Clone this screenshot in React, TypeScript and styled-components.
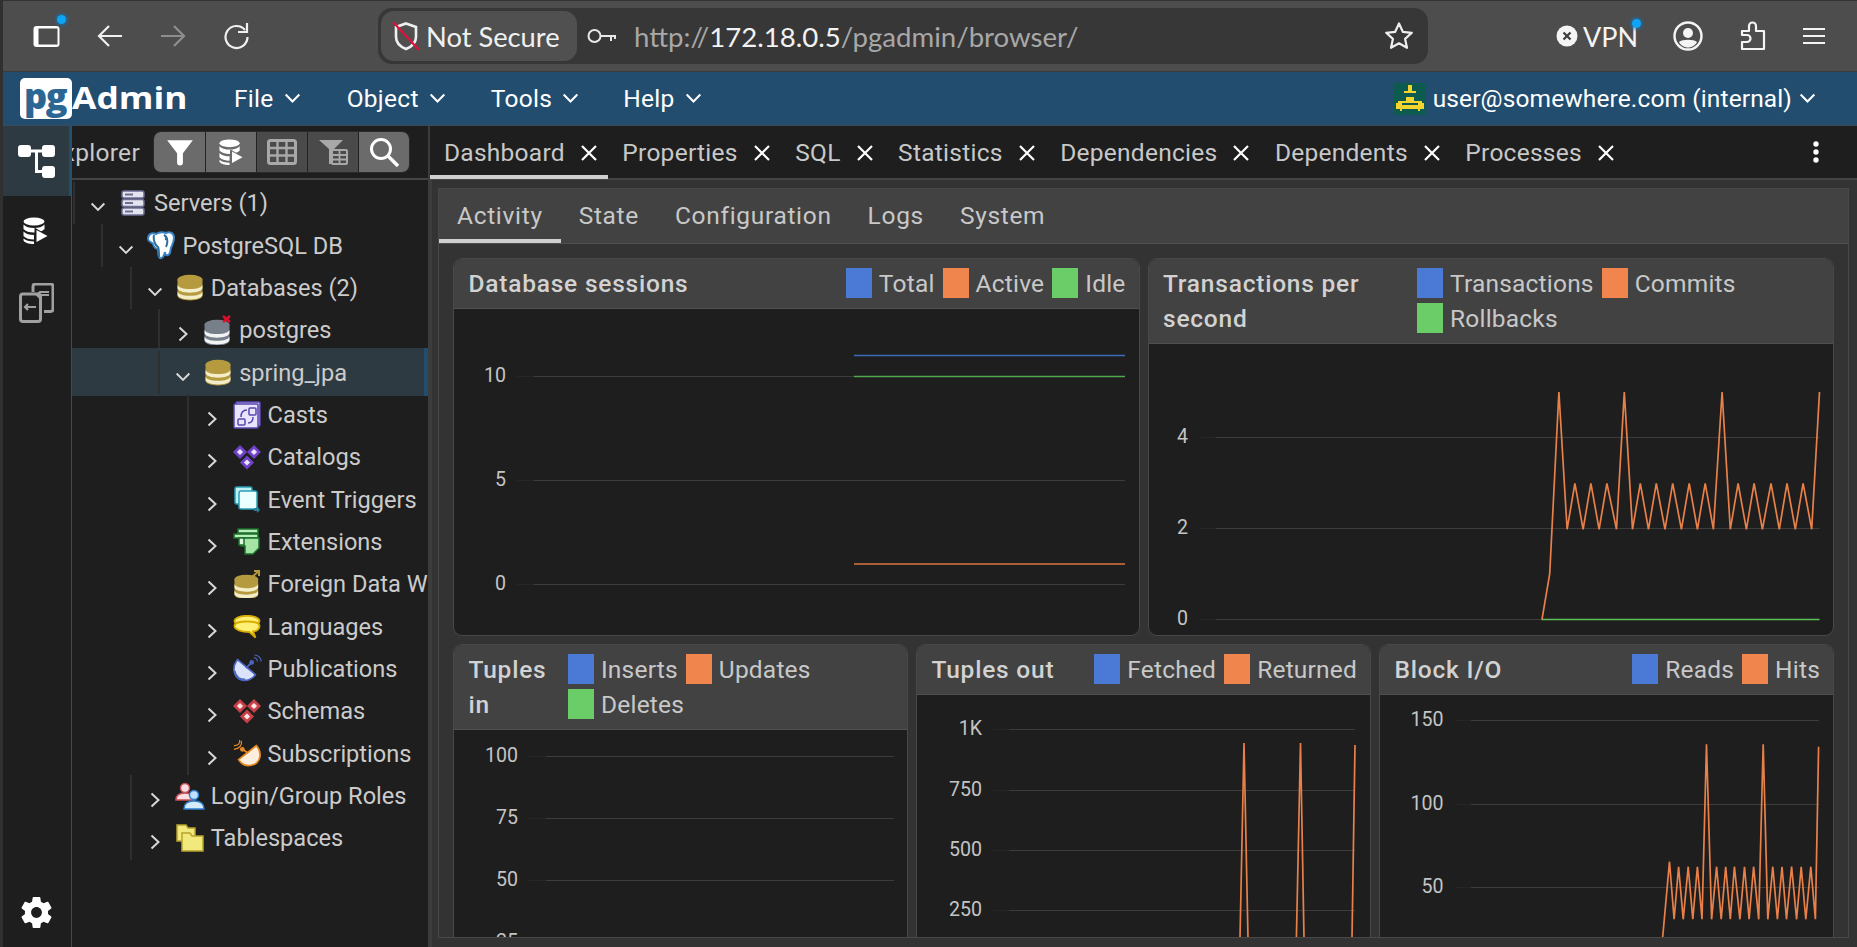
import React from 'react';
import styled, { createGlobalStyle } from 'styled-components';

const Global = createGlobalStyle`
  html, body { margin: 0; padding: 0; height: 100%; overflow: hidden; background: #1e1e1e; }
  #root { height: 100%; }
  * { box-sizing: border-box; }
`;

const Page = styled.div`
  height: 947px; width: 1857px; display: flex; flex-direction: column;
  font-family: Roboto, "Liberation Sans", sans-serif; color: #c8c8c8;
  border-left: 3px solid #303030; overflow: hidden;
`;

/* ---------- browser chrome ---------- */
const BrowserBar = styled.div`
  height: 72px; flex: none; display: flex; align-items: center; background: #4d4d4d;
  border-top: 1px solid #333; border-bottom: 1px solid #3a3a3a; padding-left: 12px;
  font-family: Lato, "Noto Sans", sans-serif;
`;
const NavSlot = styled.div<{ $w?: number; $ml?: number }>`
  width: ${p => p.$w ?? 63}px; margin-left: ${p => p.$ml ?? 0}px; flex: none; height: 40px; display: flex; align-items: center; justify-content: center;
  position: relative;
`;
const AddressBar = styled.div`
  margin-left: 111px; width: 1050px; height: 56px; border-radius: 14px; background: #373737; flex: none;
  display: flex; align-items: center; padding: 3px 14px 3px 3px;
`;
const SecurityChip = styled.div`
  width: 196px; height: 50px; border-radius: 13px; background: #505050; display: flex; align-items: center;
  padding-left: 11px; gap: 6px; color: #f0f0f0; font-size: 27.3px; flex: none;
`;
const UrlText = styled.div`
  margin-left: 17px; flex: 1; font-size: 27.6px; color: #a8a8a8; white-space: nowrap;
  b { color: #f2f2f2; font-weight: 400; }
`;
const RightTools = styled.div`
  margin-left: 128px; display: flex; align-items: center; flex: none;
`;
const VpnPill = styled.div`
  display: flex; align-items: center; gap: 5px; color: #f4f4f4; font-size: 27px; position: relative; width: 102px;
`;
const BlueDot = styled.span<{ $x: number; $y: number }>`
  position: absolute; left: ${p => p.$x}px; top: ${p => p.$y}px; width: 9px; height: 9px; border-radius: 50%;
  background: #0ea5f5; box-shadow: 0 0 3px 2px rgba(14,120,190,.55);
`;

/* ---------- pgAdmin header ---------- */
const AppHeader = styled.div`
  height: 54px; flex: none; background: #224d6f; display: flex; align-items: center; padding: 0 41px 0 17px;
  border-bottom: 1px solid #3a4a58; color: #fff;
`;
const LogoBox = styled.div`
  width: 52px; height: 41px; background: #fff; border-radius: 5px; display: flex; align-items: center; justify-content: center;
  color: #2c6794; font: 800 36px/41px "Open Sans", sans-serif; letter-spacing: -1.5px; padding: 0 2px 7px 0; flex: none;
`;
const LogoWord = styled.div`
  font: 700 31px/1 "Open Sans", sans-serif; color: #fff; width: 114px; flex: none; white-space: nowrap;
  transform: scaleX(1.14); transform-origin: left center; padding-bottom: 3px;
`;
const Menu = styled.div`
  display: flex; align-items: center; margin-left: 48px; gap: 10px; font-size: 24.5px; color: #fff; letter-spacing: .3px;
`;
const MenuGap = styled.div<{ $w: number }>` width: ${p => p.$w}px; flex: none; `;
const UserArea = styled.div`
  margin-left: auto; display: flex; align-items: center; gap: 7px; font-size: 24.5px; color: #fff; letter-spacing: .12px;
`;

/* ---------- workspace ---------- */
const Workspace = styled.div` flex: 1; min-height: 0; display: flex; `;
const ActivityBar = styled.div`
  width: 69px; flex: none; background: #1e1e1e; border-right: 1px solid #484848; display: flex; flex-direction: column;
`;
const ActivityButton = styled.div<{ $active?: boolean }>`
  height: 70px; display: flex; align-items: center; justify-content: center;
  background: ${p => (p.$active ? '#2e3a42' : 'transparent')};
  border-right: 2px solid ${p => (p.$active ? '#224d6f' : 'transparent')};
`;
const ActivitySpacer = styled.div` flex: 1; `;

const TreePanel = styled.div` width: 356px; flex: none; background: #1e1e1e; display: flex; flex-direction: column; overflow: hidden; `;
const TreeToolbar = styled.div`
  height: 54px; flex: none; display: flex; align-items: center; border-bottom: 2px solid #444; padding-right: 18px;
`;
const ToolbarTitle = styled.div`
  flex: 1; min-width: 0; overflow: hidden; display: flex; justify-content: flex-end; padding-right: 13px;
  font-size: 24.5px; color: #c8c8c8; white-space: nowrap; letter-spacing: .3px;
`;
const ToolGroup = styled.div`
  display: flex; height: 42px; border-radius: 8px; overflow: hidden; flex: none; border: 1px solid #2a2a2a;
`;
const ToolButton = styled.div<{ $off?: boolean }>`
  width: 51px; display: flex; align-items: center; justify-content: center;
  background: ${p => (p.$off ? '#4a4a4a' : '#6b6b6b')};
  & + & { border-left: 1px solid #222; }
`;
const Tree = styled.div` padding-top: 2px; flex: 1; `;
const Row = styled.div<{ $level: number; $selected?: boolean }>`
  height: 42.35px; display: flex; align-items: center; position: relative; white-space: nowrap;
  padding-left: ${p => 18 + p.$level * 28.4}px; font-size: 23.6px; color: #cbcbcb;
  &::before {
    content: ''; position: absolute; left: 0; right: 0; top: -3px; bottom: -2px; display: ${p => (p.$selected ? 'block' : 'none')};
    background: #2e3a42; border-right: 4px solid #224d6f;
  }
  &::after {
    content: ''; position: absolute; top: 0; bottom: 0; left: ${p => 1 + p.$level * 28.4}px; width: 2px; background: #2f2f2f;
  }
  > * { position: relative; z-index: 1; }
`;
const Chevron = styled.div` width: 16px; flex: none; display: flex; justify-content: center; padding-top: 8px; `;
const RowIcon = styled.div` width: 30px; height: 30px; margin-left: 12px; margin-right: 6px; flex: none; display: flex; align-items: center; justify-content: center; `;

const Splitter = styled.div` width: 4px; flex: none; background: #3c3c3c; `;

/* ---------- main panel ---------- */
const MainPanel = styled.div` flex: 1; min-width: 0; display: flex; flex-direction: column; background: #333; `;
const TabStrip = styled.div`
  height: 54px; flex: none; background: #1e1e1e; display: flex; align-items: stretch; border-bottom: 2px solid #444;
  margin-left: -2px; padding-right: 37px; font-size: 24.5px;
`;
const DockTab = styled.div<{ $active?: boolean }>`
  display: flex; align-items: center; gap: 15px; padding: 0 10.5px 0 14px; color: #c8c8c8; white-space: nowrap; letter-spacing: .26px;
  border-bottom: 4px solid ${p => (p.$active ? '#cfcfcf' : 'transparent')}; margin-bottom: -1px; padding-top: 4px;
`;
const TabMore = styled.div` margin-left: auto; display: flex; align-items: center; `;
const Panel = styled.div`
  flex: 1; min-height: 0; margin: 8px 8px 9px 6px; border: 1px solid #484848; display: flex; flex-direction: column; overflow: hidden;
`;
const InnerTabs = styled.div`
  height: 55px; flex: none; background: #424242; display: flex; border-bottom: 1px solid #505050; font-size: 24.5px;
`;
const InnerTab = styled.div<{ $active?: boolean }>`
  padding: 2px 18px 0; display: flex; align-items: center; color: #c8c8c8; letter-spacing: .68px; white-space: nowrap;
  border-bottom: 4px solid ${p => (p.$active ? '#cfcfcf' : 'transparent')};
`;
const Dash = styled.div` flex: 1; min-height: 0; padding: 14px 14px 0; display: flex; flex-direction: column; gap: 8px; `;
const ChartRow = styled.div<{ $h: number }>` display: flex; gap: 8px; height: ${p => p.$h}px; flex: none; `;
const Card = styled.div`
  flex: 1 1 0; min-width: 0; background: #1e1e1e; border: 1px solid #484848; border-radius: 9px; overflow: hidden; display: flex; flex-direction: column;
`;
const CardHead = styled.div`
  flex: none; background: #424242; display: flex; justify-content: space-between; padding: 9px 13px 10px 14.5px; border-bottom: 1px solid #505050;
`;
const CardTitle = styled.div`
  font-size: 24.5px; font-weight: 500; color: #d2d2d2; line-height: 35px; margin: -2.5px 0; flex: 1 1 0; min-width: 0; letter-spacing: .78px;
`;
const Legend = styled.div<{ $w?: number }>`
  display: flex; flex-wrap: wrap; gap: 5px 8px; flex: ${p => (p.$w ? `0 0 ${p.$w}px` : 'none')};
`;
const LegendItem = styled.div` display: flex; align-items: center; gap: 7px; height: 30px; font-size: 24.5px; color: #c8c8c8; letter-spacing: .2px; white-space: nowrap; `;
const Swatch = styled.span<{ $c: string }>` width: 26px; height: 30px; background: ${p => p.$c}; flex: none; `;
const ChartBody = styled.div` flex: 1; min-height: 0; overflow: hidden; svg { display: block; } `;
const AxisLabel = styled.text` font-family: Roboto, sans-serif; font-size: 19.6px; fill: #c4c4c4; text-anchor: end; `;

const BLUE = '#4a79d6', ORANGE = '#f0864d', GREEN = '#6acd68';

/* ---------- small glyphs ---------- */
const Down = ({ c = '#d8d8d8', s = 14 }: { c?: string; s?: number }) => (
  <svg width={s + 2} height={s * 0.7} viewBox="0 0 16 10"><polyline points="1.5,1.5 8,8 14.5,1.5" fill="none" stroke={c} strokeWidth="2" /></svg>
);
const Right = () => (
  <svg width={10} height={16} viewBox="0 0 10 16"><polyline points="1.5,1.5 8.5,8 1.5,14.5" fill="none" stroke="#d8d8d8" strokeWidth="2" /></svg>
);
const Close = () => (
  <svg width={18} height={18} viewBox="0 0 18 18"><path d="M2 2 16 16M16 2 2 16" stroke="#fff" strokeWidth="2.2" /></svg>
);

const Cyl = ({ top, band, light }: { top: string; band: string; light: string }) => (
  <svg width="28" height="27" viewBox="0 0 26 26">
    <path d="M1 5v16c0 2.6 5.4 4.5 12 4.5S25 23.600 25 21V5z" fill={band} />
    <path d="M1 10c0 2.600 5.400 4.500 12 4.500S25 12.600 25 10v3.500c0 2.600-5.400 4.500-12 4.500S1 16.100 1 13.500z" fill={light} />
    <path d="M1 16.500c0 2.600 5.400 4.500 12 4.500s12-1.900 12-4.500V20c0 2.600-5.400 4.500-12 4.500S1 22.600 1 20z" fill={light} />
    <ellipse cx="13" cy="5.500" rx="12" ry="4.800" fill={top} />
  </svg>
);
const Diamonds = ({ c, f }: { c: string; f: string }) => (
  <svg width="28" height="27" viewBox="0 0 28 27">
    {[[7, 8], [21, 8], [14, 18.500]].map(([x, y]) => (
      <g key={`${x}${y}`}>
        <rect x={x - 5} y={y - 5} width="10" height="10" transform={`rotate(45 ${x} ${y})`} fill={c} />
        <rect x={x - 2.200} y={y - 2.200} width="4.400" height="4.400" transform={`rotate(45 ${x} ${y})`} fill={f} />
      </g>
    ))}
  </svg>
);

const ServersIcon = () => (
  <svg width="24" height="26" viewBox="0 0 24 26">
    {[1, 9.500, 18].map(y => (
      <g key={y}><rect x="1" y={y} width="22" height="7" rx="2" fill="#e4e4ee" stroke="#6d6d94" strokeWidth="1.500" /><rect x="4" y={y + 2.500} width="8" height="2" fill="#6d6d94" /></g>
    ))}
  </svg>
);
const Elephant = () => (
  <svg width="30" height="32" viewBox="0 0 30 32">
    <path d="M2 9c0-5 4-7 8-5 3-2 7-2 10-1 4-2 8 0 8 5 0 4-2 7-3 10-1 2 0 6-3 7-2 1-3-1-3-3-1 3-2 7-5 6-2-1-2-6-2-9-3 0-4-2-5-5-1-2-5-2-5-5z" fill="#fff" stroke="#3a86c8" strokeWidth="2" />
    <path d="M8 5c-1 5 1 10 4 12 1 1 1 6 1 10M18 5c4 2 4 8 2 12" fill="none" stroke="#2f6f9f" strokeWidth="2" />
    <circle cx="20" cy="9" r="1.200" fill="#2f6f9f" />
  </svg>
);
const CastsIcon = () => (
  <svg width="28" height="28" viewBox="0 0 28 28">
    <rect x="3" y="1" width="24" height="24" rx="1" fill="#cfc8f2" stroke="#5b45b0" strokeWidth="1.500" />
    <rect x="1" y="3" width="24" height="24" rx="1" fill="#e7e4fb" stroke="#5b45b0" strokeWidth="1.500" />
    <rect x="16" y="7" width="7" height="7" rx="1" fill="none" stroke="#5b45b0" strokeWidth="1.500" />
    <rect x="5" y="18" width="7" height="6" rx="1" fill="none" stroke="#5b45b0" strokeWidth="1.500" />
    <path d="M8 16c0-5 2-7 6-7M20 16c0 4-2 6-5 6" fill="none" stroke="#5b45b0" strokeWidth="1.500" />
  </svg>
);
const EventIcon = () => (
  <svg width="26" height="28" viewBox="0 0 26 28">
    <rect x="1" y="1" width="17" height="17" rx="2" fill="#bff0f5" stroke="#29a0b4" strokeWidth="1.500" />
    <rect x="5" y="5" width="18" height="18" rx="2" fill="#eaffff" stroke="#29a0b4" strokeWidth="1.500" />
    <path d="M20 22h3v-2l3 4-3 3v-2h-3z" fill="#29819b" />
  </svg>
);
const ExtIcon = () => (
  <svg width="28" height="28" viewBox="0 0 28 28">
    <path d="M5 1h20v4H5zM1 6h24v4H1z" fill="#b8eeb8" stroke="#1d6f2d" strokeWidth="1.500" />
    <path d="M8 10h18v10l-6 6H12V18H8z" fill="#a5e4a5" stroke="#1d6f2d" strokeWidth="1.500" />
    <path d="M6 10h5v7H6z" fill="#dff7df" stroke="#1d6f2d" strokeWidth="1.500" />
  </svg>
);
const FdwIcon = () => (
  <svg width="28" height="28" viewBox="0 0 28 28">
    <g transform="translate(0 4) scale(.95)"><Cyl top="#b59a3f" band="#b59a3f" light="#f3edc9" /></g>
    <path d="M19 7 26 1M21 1h5v5" fill="none" stroke="#b59a3f" strokeWidth="2" />
  </svg>
);
const LangIcon = () => (
  <svg width="28" height="24" viewBox="0 0 28 24">
    <ellipse cx="14" cy="6" rx="12.500" ry="5.200" fill="#fff176" stroke="#d8ac00" strokeWidth="1.800" />
    <path d="M1.500 11c0-3 5-4.500 12.500-4.500S26.500 8 26.500 11s-3 5-6.500 5.500l2.500 6-6-5.500c-8 0-15-2.500-15-6z" fill="#fff176" stroke="#d8ac00" strokeWidth="1.800" />
  </svg>
);
const PubIcon = () => (
  <svg width="32" height="32" viewBox="0 0 32 32">
    <path d="M6 6C0 13 1 23 8 27c7 3 14 0 17-5z" fill="#dbe3fa" stroke="#4a66c2" strokeWidth="1.800" />
    <path d="M3 18c1 5 5 9 11 9" fill="none" stroke="#4a66c2" strokeWidth="1.500" />
    <path d="M15 15l6-6" stroke="#4a66c2" strokeWidth="2" />
    <circle cx="21" cy="9" r="2.500" fill="#4a66c2" />
    <path d="M23 4c2 0 4 1 4 4M24 1c4 0 7 3 7 7" fill="none" stroke="#4a66c2" strokeWidth="1.200" />
  </svg>
);
const SubIcon = () => (
  <svg width="32" height="32" viewBox="0 0 32 32">
    <path d="M26 7c6 7 5 16-2 20-7 3-13 1-17-5z" fill="#fdeedd" stroke="#e88a22" strokeWidth="1.800" />
    <path d="M17 15 11 11" stroke="#e88a22" strokeWidth="2" />
    <circle cx="11" cy="11" r="2.500" fill="#e88a22" />
    <path d="M8 1c1 3-1 6-6 6M10 2c1 5-2 8-8 9" fill="none" stroke="#e88a22" strokeWidth="1.300" />
  </svg>
);
const RolesIcon = () => (
  <svg width="30" height="28" viewBox="0 0 30 28">
    <circle cx="10" cy="6" r="4.500" fill="#fbdede" stroke="#c8505a" strokeWidth="1.500" />
    <path d="M1 18c0-5 3-7 9-7s9 2 9 7z" fill="#fbdede" stroke="#c8505a" strokeWidth="1.500" />
    <circle cx="19" cy="13" r="4.500" fill="#bfe1fb" stroke="#2f7fd0" strokeWidth="1.500" />
    <path d="M9 27c0-6 4-8 10-8s10 2 10 8z" fill="#d6ecfc" stroke="#2f7fd0" strokeWidth="1.500" />
  </svg>
);
const TableSpaces = () => (
  <svg width="28" height="28" viewBox="0 0 28 28">
    <path d="M1 1h9l2 3h7v13H1z" fill="#f2e97c" stroke="#b8a22c" strokeWidth="1.500" />
    <path d="M6 9h8l2 3h11v15H6z" fill="#f2e97c" stroke="#b8a22c" strokeWidth="1.500" />
  </svg>
);
const PostgresIcon = () => (
  <svg width="30" height="30" viewBox="0 0 30 30">
    <g transform="translate(0 4)"><Cyl top="#77808a" band="#77808a" light="#f2f3f5" /></g>
    <path d="M20 1l7 6M27 1l-7 6" stroke="#e0102c" strokeWidth="2.400" />
  </svg>
);
const Gold = () => <Cyl top="#b59a3f" band="#b59a3f" light="#f3edc9" />;

/* tool icons */
const Funnel = ({ c = '#fff', s = 28 }: { c?: string; s?: number }) => (
  <svg width={s} height={s} viewBox="0 0 24 24"><path d="M1 2h22L14.500 13v8.500c0 1.500-1 2-2.500 2s-2.500-.5-2.500-2V13z" fill={c} /></svg>
);
const DbPlay = ({ s = 28, gap = '#6b6b6b' }: { s?: number; gap?: string }) => (
  <svg width={s} height={s} viewBox="0 0 28 28">
    <ellipse cx="12" cy="4.500" rx="10.500" ry="4" fill="#fff" />
    <path d="M1.500 7.500c2 2.500 6 3.500 10.500 3.500s8.500-1 10.500-3.500V12c-2 2.500-6 3.500-10.500 3.500S3.500 14.500 1.500 12z" fill="#fff" />
    <path d="M1.500 14.500c2 2.500 6 3.500 10.500 3.500v4.500c-4.500 0-8.500-1-10.500-3.500z" fill="#fff" />
    <path d="M1.500 21.500c2 2 6 3 10.500 3v2.500c-5 0-10.500-1.500-10.500-4z" fill="#fff" />
    <path d="M12.500 10.500v17.500l15-8.750z" fill={gap} />
    <path d="M14.500 13v12l11-6z" fill="#fff" />
  </svg>
);
const GridIcon = () => (
  <svg width="30" height="26" viewBox="0 0 30 26">
    <rect x="1.500" y="1.500" width="27" height="23" rx="2" fill="none" stroke="#a8a8a8" strokeWidth="3" />
    <path d="M1.500 9h27M1.500 16.500h27M10.500 1.500v23M19.500 1.500v23" stroke="#a8a8a8" strokeWidth="2.400" />
  </svg>
);
const FilterGrid = () => (
  <svg width="30" height="26" viewBox="0 0 30 26">
    <path d="M1 1h24l-9 9v15h-5V10z" fill="#a8a8a8" />
    <rect x="14" y="11" width="15" height="14" rx="1" fill="#4a4a4a" stroke="#a8a8a8" strokeWidth="2" />
    <path d="M14 16h15M14 20.500h15M21.500 11v14" stroke="#a8a8a8" strokeWidth="1.800" />
  </svg>
);
const Search = () => (
  <svg width="30" height="30" viewBox="0 0 30 30">
    <circle cx="12" cy="12" r="9.500" fill="none" stroke="#fff" strokeWidth="3" /><path d="M19 19l10 10" stroke="#fff" strokeWidth="3.400" />
  </svg>
);
const TreeNav = () => (
  <svg width="37" height="33" viewBox="0 0 37 33">
    <rect x="0" y="0" width="13" height="12" rx="3" fill="#fff" /><rect x="24" y="0" width="13" height="12" rx="3" fill="#fff" /><rect x="24" y="21" width="13" height="12" rx="3" fill="#fff" />
    <path d="M13 6h11M18.500 6v20.500H24" fill="none" stroke="#fff" strokeWidth="3" />
  </svg>
);
const Compare = () => (
  <svg width="35" height="40" viewBox="0 0 35 40" style={{ marginTop: 3 }}>
    <path d="M14 9V3.500C14 2 15 1 16.500 1h15C33 1 34 2 34 3.500V26c0 1.500-1 2.500-2.500 2.500H25" fill="none" stroke="#a0a0a0" strokeWidth="3" />
    <rect x="1.500" y="11" width="20" height="27.500" rx="2.500" fill="none" stroke="#a0a0a0" strokeWidth="3" />
    <path d="M30 9h-9l-3 3 3 3M18 12h12" fill="none" stroke="#a0a0a0" strokeWidth="2.200" />
    <path d="M6 24h11M9 21l-3 3 3 3" fill="none" stroke="#a0a0a0" strokeWidth="2.200" />
  </svg>
);
const Gear = () => (
  <svg width="37" height="37" viewBox="0 0 24 24">
    <path fill="#fff" d="M19.430 12.980c.04-.32.07-.64.07-.98 0-.34-.03-.66-.07-.98l2.110-1.650c.19-.15.24-.42.120-.64l-2-3.460c-.12-.22-.39-.3-.61-.22l-2.490 1c-.52-.4-1.080-.73-1.690-.98l-.38-2.650C14.460 2.180 14.250 2 14 2h-4c-.25 0-.46.18-.49.420l-.38 2.650c-.61.25-1.170.59-1.690.98l-2.490-1c-.23-.09-.49 0-.61.220l-2 3.460c-.13.22-.07.490.120.640l2.110 1.650c-.04.320-.07.650-.07.980 0 .33.030.660.070.980l-2.110 1.650c-.19.150-.24.420-.12.640l2 3.460c.12.220.39.300.61.220l2.490-1c.52.400 1.080.730 1.690.980l.38 2.650c.03.240.24.420.49.420h4c.25 0 .46-.18.490-.42l.38-2.650c.61-.25 1.170-.59 1.690-.98l2.490 1c.23.090.49 0 .61-.22l2-3.460c.12-.22.07-.49-.12-.64l-2.110-1.650zM12 15.500c-1.930 0-3.500-1.570-3.500-3.500s1.570-3.500 3.500-3.500 3.500 1.570 3.500 3.500-1.570 3.500-3.500 3.500z" />
  </svg>
);
const Avatar = () => (
  <svg width="32" height="32" viewBox="0 0 16 16" shapeRendering="crispEdges">
    <rect width="16" height="16" fill="#0d5a50" />
    <path d="M7 1h2v3h2v1H5V4h2zM6 7h4v2h4v1h1v3h-2v1h-1v-1H4v1H3v-1H1v-3h1V9h4zM4 10v1h8v-1z" fill="#f5d430" fillRule="evenodd" />
  </svg>
);

/* chrome icons */
const WindowIcon = () => (
  <svg width="30" height="26" viewBox="0 0 30 26">
    <rect x="1.500" y="3" width="26" height="21" rx="3" fill="#fff" />
    <rect x="6.500" y="5.500" width="19" height="16" fill="#4d4d4d" />
  </svg>
);
const Arrow = ({ c, flip }: { c: string; flip?: boolean }) => (
  <svg width="26" height="24" viewBox="0 0 26 24" style={flip ? { transform: 'scaleX(-1)' } : undefined}>
    <path d="M25 12H2M12 2 2 12l10 10" fill="none" stroke={c} strokeWidth="2.200" />
  </svg>
);
const Reload = () => (
  <svg width="26" height="28" viewBox="0 0 26 28">
    <path d="M22 8a11 11 0 1 0 2.500 7" fill="none" stroke="#f0f0f0" strokeWidth="2.200" />
    <path d="M24 1v9h-9" fill="none" stroke="#f0f0f0" strokeWidth="2.200" />
  </svg>
);
const Shield = () => (
  <svg width="28" height="30" viewBox="0 0 28 30">
    <path d="M14 2.500 24 6v10c0 6-5 10-10 12C9 26 4 22 4 16V6z" fill="none" stroke="#f0f0f0" strokeWidth="2.600" />
    <path d="M1 1 27 29" stroke="#e0123c" strokeWidth="2.200" />
  </svg>
);
const KeyIcon = () => (
  <svg width="30" height="18" viewBox="0 0 30 18">
    <circle cx="7.500" cy="9" r="6" fill="none" stroke="#e8e8e8" strokeWidth="2" />
    <path d="M13.500 9H29M24 9v5M28 9v3" fill="none" stroke="#e8e8e8" strokeWidth="2" />
  </svg>
);
const Star = () => (
  <svg width="30" height="30" viewBox="0 0 30 30">
    <path d="M15 2.500l3.800 8.300 9 1-6.700 6.100 1.900 8.900L15 22.300 7 26.800l1.900-8.900-6.700-6.100 9-1z" fill="none" stroke="#eee" strokeWidth="2.200" strokeLinejoin="round" />
  </svg>
);
const VpnX = () => (
  <svg width="22" height="22" viewBox="0 0 22 22">
    <circle cx="11" cy="11" r="10.500" fill="#f4f4f4" /><path d="M7.500 7.500l7 7M14.500 7.500l-7 7" stroke="#3c3c3c" strokeWidth="2.200" />
  </svg>
);
const Profile = () => (
  <svg width="30" height="30" viewBox="0 0 30 30">
    <circle cx="15" cy="15" r="13.500" fill="none" stroke="#f4f4f4" strokeWidth="2.400" />
    <circle cx="15" cy="12" r="5" fill="#f4f4f4" /><path d="M6 21c3-3 15-3 18 0-2 4-6 5.500-9 5.500S8 25 6 21z" fill="#f4f4f4" />
  </svg>
);
const Puzzle = () => (
  <svg width="26" height="30" viewBox="0 0 26 30">
    <path d="M2 10h7V5a3.500 3.500 0 0 1 7 0v5h8v18H2v-7h5a3.500 3.500 0 0 0 0-7H2z" fill="none" stroke="#f4f4f4" strokeWidth="2.200" strokeLinejoin="round" />
  </svg>
);
const Burger = () => (
  <svg width="22" height="18" viewBox="0 0 22 18"><path d="M0 2h22M0 9h22M0 16h22" stroke="#f4f4f4" strokeWidth="2.200" /></svg>
);
const Kebab = () => (
  <svg width="8" height="24" viewBox="0 0 8 24"><circle cx="4" cy="4" r="2.700" fill="#fff" /><circle cx="4" cy="12" r="2.700" fill="#fff" /><circle cx="4" cy="20" r="2.700" fill="#fff" /></svg>
);

/* chart helpers: coordinates are given in page pixels so each plot maps 1:1 on the viewBox */
type Line = { c: string; pts: string };
type PlotSpec = { l: number; t: number; w: number; h: number; x0: number; x1: number; lx: number; ticks: [string, number][]; lines: Line[] };
const Plot = ({ l, t, w, h, x0, x1, lx, ticks, lines }: PlotSpec) => (
  <svg width={w} height={h} viewBox={`${l} ${t} ${w} ${h}`}>
    {ticks.map(([label, y]) => (
      <g key={label}>
        <path d={`M${lx + 11} ${y + .5}H${x0}`} stroke="#262626" />
        <path d={`M${x0} ${y + .5}H${x1}`} stroke="#3c3c3c" strokeWidth="1.200" />
        <AxisLabel x={lx} y={y + 6}>{label}</AxisLabel>
      </g>
    ))}
    {lines.map((s, i) => <polyline key={i} points={s.pts} fill="none" stroke={s.c} strokeWidth="1.700" strokeLinejoin="miter" />)}
  </svg>
);
const mapPts = (raw: number[][], ox: number, sx: number, oy: number) =>
  raw.map(([x, y]) => `${(ox + x * sx).toFixed(1)},${(oy + y / 3).toFixed(1)}`).join(' ');

const txRaw = [[878,898],[895,762],[915,216],[933,628],[950,490],[968,628],[985,490],[1003,628],[1020,490],[1041,628],[1058,216],[1076,628],[1093,490],[1111,628],[1128,490],[1147,628],[1164,490],[1183,628],[1200,490],[1218,628],[1235,490],[1253,628],[1272,216],[1290,628],[1307,490],[1325,628],[1342,490],[1360,628],[1379,490],[1397,628],[1414,490],[1432,628],[1449,490],[1468,628],[1485,216]];
const ioRaw = [[1143,894],[1158,665],[1168,838],[1178,680],[1188,838],[1199,680],[1209,838],[1219,680],[1229,838],[1239,313],[1250,838],[1261,680],[1271,838],[1281,680],[1291,838],[1300,680],[1312,838],[1322,680],[1332,838],[1342,680],[1353,838],[1363,313],[1373,838],[1384,680],[1394,838],[1404,680],[1414,838],[1425,680],[1436,838],[1446,680],[1456,838],[1467,680],[1477,838],[1484,320]];

const LineOrange = '#e8804a';

type TreeItem = { level: number; label: string; icon: React.ReactNode; open?: boolean; selected?: boolean };
const items: TreeItem[] = [
  { level: 0, label: 'Servers (1)', icon: <ServersIcon />, open: true },
  { level: 1, label: 'PostgreSQL DB', icon: <Elephant />, open: true },
  { level: 2, label: 'Databases (2)', icon: <Gold />, open: true },
  { level: 3, label: 'postgres', icon: <PostgresIcon /> },
  { level: 3, label: 'spring_jpa', icon: <Gold />, open: true, selected: true },
  { level: 4, label: 'Casts', icon: <CastsIcon /> },
  { level: 4, label: 'Catalogs', icon: <Diamonds c="#6f42c8" f="#ece6fb" /> },
  { level: 4, label: 'Event Triggers', icon: <EventIcon /> },
  { level: 4, label: 'Extensions', icon: <ExtIcon /> },
  { level: 4, label: 'Foreign Data Wrappers', icon: <FdwIcon /> },
  { level: 4, label: 'Languages', icon: <LangIcon /> },
  { level: 4, label: 'Publications', icon: <PubIcon /> },
  { level: 4, label: 'Schemas', icon: <Diamonds c="#c8404a" f="#fbe6e6" /> },
  { level: 4, label: 'Subscriptions', icon: <SubIcon /> },
  { level: 2, label: 'Login/Group Roles', icon: <RolesIcon /> },
  { level: 2, label: 'Tablespaces', icon: <TableSpaces /> },
];
const dockTabs = ['Dashboard', 'Properties', 'SQL', 'Statistics', 'Dependencies', 'Dependents', 'Processes'];
const innerTabs = ['Activity', 'State', 'Configuration', 'Logs', 'System'];

const LegendList = ({ list, w }: { list: [string, string][]; w?: number }) => (
  <Legend $w={w}>
    {list.map(([c, t]) => <LegendItem key={t}><Swatch $c={c} />{t}</LegendItem>)}
  </Legend>
);

export default function App() {
  return (
    <Page>
      <Global />
      <BrowserBar>
        <NavSlot><WindowIcon /><BlueDot $x={42} $y={-1} /></NavSlot>
        <NavSlot><Arrow c="#f0f0f0" /></NavSlot>
        <NavSlot><Arrow c="#8e8e8e" flip /></NavSlot>
        <NavSlot><Reload /></NavSlot>
        <AddressBar>
          <SecurityChip><Shield />Not Secure</SecurityChip>
          <NavSlot $w={30} $ml={10}><KeyIcon /></NavSlot>
          <UrlText>http://<b>172.18.0.5</b>/pgadmin/browser/</UrlText>
          <Star />
        </AddressBar>
        <RightTools>
          <VpnPill><VpnX />VPN<BlueDot $x={76} $y={-1} /></VpnPill>
          <NavSlot $w={59}><Profile /></NavSlot>
          <NavSlot $w={71}><Puzzle /></NavSlot>
          <NavSlot $w={52}><Burger /></NavSlot>
        </RightTools>
      </BrowserBar>

      <AppHeader>
        <LogoBox>pg</LogoBox>
        <LogoWord>Admin</LogoWord>
        <Menu>File <Down c="#fff" s={15} /><MenuGap $w={26} />Object <Down c="#fff" s={15} /><MenuGap $w={25} />Tools <Down c="#fff" s={15} /><MenuGap $w={24} />Help <Down c="#fff" s={15} /></Menu>
        <UserArea><Avatar />user@somewhere.com (internal) <Down c="#fff" s={15} /></UserArea>
      </AppHeader>

      <Workspace>
        <ActivityBar>
          <ActivityButton $active><TreeNav /></ActivityButton>
          <ActivityButton><DbPlay gap="#1e1e1e" /></ActivityButton>
          <ActivityButton><Compare /></ActivityButton>
          <ActivitySpacer />
          <ActivityButton><Gear /></ActivityButton>
        </ActivityBar>
        <TreePanel>
          <TreeToolbar>
            <ToolbarTitle><span>Object Explorer</span></ToolbarTitle>
            <ToolGroup>
              <ToolButton><Funnel /></ToolButton>
              <ToolButton><DbPlay s={27} /></ToolButton>
              <ToolButton $off><GridIcon /></ToolButton>
              <ToolButton $off><FilterGrid /></ToolButton>
              <ToolButton><Search /></ToolButton>
            </ToolGroup>
          </TreeToolbar>
          <Tree>
            {items.map(it => (
              <Row key={it.label} $level={it.level} $selected={it.selected}>
                <Chevron>{it.open ? <Down s={14} /> : <Right />}</Chevron>
                <RowIcon>{it.icon}</RowIcon>
                <span>{it.label}</span>
              </Row>
            ))}
          </Tree>
        </TreePanel>
        <Splitter />
        <MainPanel>
          <TabStrip>
            {dockTabs.map((t, i) => <DockTab key={t} $active={i === 0}>{t}<Close /></DockTab>)}
            <TabMore><Kebab /></TabMore>
          </TabStrip>
          <Panel>
            <InnerTabs>
              {innerTabs.map((t, i) => <InnerTab key={t} $active={i === 0}>{t}</InnerTab>)}
            </InnerTabs>
            <Dash>
              <ChartRow $h={378}>
                <Card>
                  <CardHead><CardTitle>Database sessions</CardTitle><LegendList list={[[BLUE, 'Total'], [ORANGE, 'Active'], [GREEN, 'Idle']]} /></CardHead>
                  <ChartBody>
                    <Plot l={454} t={309} w={684} h={326} x0={534} x1={1125} lx={506} ticks={[['10', 376], ['5', 480], ['0', 584]]}
                      lines={[{ c: '#3e6bb8', pts: '854,355.5 1125,355.5' }, { c: '#53a84f', pts: '854,376.5 1125,376.5' }, { c: '#d9743f', pts: '854,564 1125,564' }]} />
                  </ChartBody>
                </Card>
                <Card>
                  <CardHead><CardTitle>Transactions per second</CardTitle><LegendList w={403} list={[[BLUE, 'Transactions'], [ORANGE, 'Commits'], [GREEN, 'Rollbacks']]} /></CardHead>
                  <ChartBody>
                    <Plot l={1148.500} t={344} w={685} h={292} x0={1215} x1={1819} lx={1187.500} ticks={[['4', 437], ['2', 528], ['0', 619]]}
                      lines={[{ c: '#5cc05a', pts: '1541,619.500 1819,619.500' }, { c: LineOrange, pts: mapPts(txRaw, 1140, 1 / 2.187, 320) }]} />
                  </ChartBody>
                </Card>
              </ChartRow>
              <ChartRow $h={400}>
                <Card>
                  <CardHead><CardTitle>Tuples in</CardTitle><LegendList w={326} list={[[BLUE, 'Inserts'], [ORANGE, 'Updates'], [GREEN, 'Deletes']]} /></CardHead>
                  <ChartBody>
                    <Plot l={454} t={730} w={453} h={300} x0={546} x1={894} lx={518} ticks={[['100', 756], ['75', 818], ['50', 880], ['25', 942]]} lines={[]} />
                  </ChartBody>
                </Card>
                <Card>
                  <CardHead><CardTitle>Tuples out</CardTitle><LegendList list={[[BLUE, 'Fetched'], [ORANGE, 'Returned']]} /></CardHead>
                  <ChartBody>
                    <Plot l={917} t={695} w={452} h={300} x0={1009} x1={1355} lx={982} ticks={[['1K', 729], ['750', 790], ['500', 850], ['250', 910]]}
                      lines={[{ c: LineOrange, pts: '1240,938 1244,743 1248,938' }, { c: LineOrange, pts: '1296.400,938 1300.500,743 1304,938' }, { c: LineOrange, pts: '1352,938 1355,745' }]} />
                  </ChartBody>
                </Card>
                <Card>
                  <CardHead><CardTitle>Block I/O</CardTitle><LegendList list={[[BLUE, 'Reads'], [ORANGE, 'Hits']]} /></CardHead>
                  <ChartBody>
                    <Plot l={1380} t={695} w={453} h={300} x0={1471} x1={1819} lx={1443.600} ticks={[['150', 720], ['100', 804], ['50', 887]]}
                      lines={[{ c: LineOrange, pts: mapPts(ioRaw, 1140, 1 / 2.187, 640) }]} />
                  </ChartBody>
                </Card>
              </ChartRow>
            </Dash>
          </Panel>
        </MainPanel>
      </Workspace>
    </Page>
  );
}
